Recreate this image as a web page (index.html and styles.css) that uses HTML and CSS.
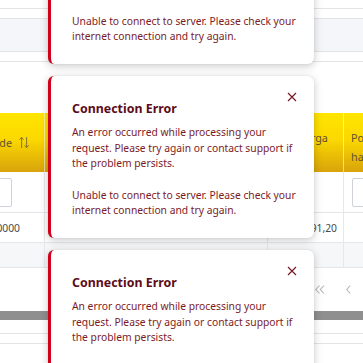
FILE: index.html
```html
<!DOCTYPE html>
<html>
<head>
<meta charset="utf-8">
<link rel="stylesheet" href="styles.css">
</head>
<body>
<div class="page">
  <div class="band b1"></div>
  <div class="band b2"></div>
  <div class="band b3"></div>
  <div class="band b4"></div>
  <div class="spacer"></div>
  <div class="grid thead">
    <div class="th th-sort"><span>de</span>
      <svg class="sort" width="10" height="13" viewBox="0 0 10 13"><path d="M2.6 12V1.5M0.6 3.7L2.6 1.3l2 2.4M7.6 1v10.5M5.6 9.3L7.6 11.7l2-2.4" fill="none" stroke="#8a7628" stroke-width="1"/></svg>
    </div>
    <div class="th"></div>
    <div class="th th-top">Carga</div>
    <div class="th th-top th-last">Porcentagem<br>habilitada</div>
  </div>
  <div class="grid trow inputs">
    <div class="td td-in-left"><div class="box"></div></div>
    <div class="td"></div>
    <div class="td"></div>
    <div class="td td-in-right"><div class="box wide"></div></div>
  </div>
  <div class="grid trow data">
    <div class="td num-left">10000</div>
    <div class="td"></div>
    <div class="td num">91,20</div>
    <div class="td"></div>
  </div>
  <div class="grid trow alt">
    <div class="td"></div>
    <div class="td"></div>
    <div class="td"></div>
    <div class="td"></div>
  </div>
  <div class="pager">
    <svg width="10" height="9" viewBox="0 0 10 9"><path d="M4.5 0.5L0.8 4.5l3.7 4M9 0.5L5.3 4.5l3.7 4" fill="none" stroke="#b5b5b5" stroke-width="1.1"/></svg>
    <svg width="5" height="9" viewBox="0 0 5 9"><path d="M4.3 0.5L0.8 4.5l3.5 4" fill="none" stroke="#b5b5b5" stroke-width="1.1"/></svg>
  </div>
  <div class="scrollbar"></div>
  <div class="band b5"></div>
  <div class="band b6"></div>
</div>

<div class="toasts">
  <div class="toast">
    <button class="close" aria-label="Close"><svg width="10" height="10" viewBox="0 0 10 10"><path d="M1 1l8 8M9 1l-8 8" stroke="#7a1a26" stroke-width="1.2"/></svg></button>
    <div class="title">Connection Error</div>
    <p class="msg">An error occurred while processing your request. Please try again or contact support if the problem persists.</p>
    <p class="msg">Unable to connect to server. Please check your internet connection and try again.</p>
  </div>
  <div class="toast">
    <button class="close" aria-label="Close"><svg width="10" height="10" viewBox="0 0 10 10"><path d="M1 1l8 8M9 1l-8 8" stroke="#7a1a26" stroke-width="1.2"/></svg></button>
    <div class="title">Connection Error</div>
    <p class="msg">An error occurred while processing your request. Please try again or contact support if the problem persists.</p>
    <p class="msg">Unable to connect to server. Please check your internet connection and try again.</p>
  </div>
  <div class="toast">
    <button class="close" aria-label="Close"><svg width="10" height="10" viewBox="0 0 10 10"><path d="M1 1l8 8M9 1l-8 8" stroke="#7a1a26" stroke-width="1.2"/></svg></button>
    <div class="title">Connection Error</div>
    <p class="msg">An error occurred while processing your request. Please try again or contact support if the problem persists.</p>
    <p class="msg">Unable to connect to server. Please check your internet connection and try again.</p>
  </div>
</div>
</body>
</html>
```

FILE: styles.css
```css
html, body {
  margin: 0;
  padding: 0;
  width: 363px;
  height: 363px;
  overflow: hidden;
  background: #ffffff;
  font-family: "Noto Sans", "Open Sans", sans-serif;
}

.page {
  position: relative;
  width: 363px;
  color: #555;
  font-size: 10.3px;
}

.band {
  border-bottom: 1px solid #e2e4e8;
}
.b1 { height: 8px; }
.b2 { height: 9px; }
.b3 { height: 32px; background: #f5f6f9; }
.b4 { height: 9px; }
.spacer { height: 51px; }

.grid {
  display: grid;
  grid-template-columns: 45px 223px 76px 100px;
  width: 444px;
}

.thead {
  height: 59px;
  background: linear-gradient(180deg, #ffe500 0%, #fbd800 45%, #d8a30c 100%);
}
.th {
  border-right: 1px solid rgba(255, 255, 255, 0.55);
  overflow: hidden;
  color: #5f5332;
  font-size: 10.8px;
  line-height: 19px;
  white-space: nowrap;
}
.th-sort {
  display: flex;
  align-items: center;
  justify-content: flex-end;
  gap: 7px;
  padding-right: 15px;
}
.th-sort span { flex: none; }
.sort { flex: none; }
.th-top {
  padding: 15px 0 0 30px;
}
.th-last {
  padding-left: 7px;
  border-right: none;
}

.trow {
  border-bottom: 1px solid #e4e6ea;
}
.td {
  border-right: 1px solid #e6e8ec;
  overflow: hidden;
  white-space: nowrap;
  display: flex;
  align-items: center;
  color: #4a4a4a;
  font-size: 10.3px;
}
.inputs { height: 40px; }
.data { height: 29px; }
.alt { height: 24px; background: #f6f7f9; }

.td-in-left { justify-content: flex-end; padding-right: 32px; }
.td-in-right { padding-left: 8px; }
.box {
  flex: none;
  width: 40px;
  height: 27px;
  border: 1px solid #cfd2d8;
  border-radius: 2px;
  background: #fff;
}

.num-left { justify-content: flex-end; padding-right: 24px; }
.num { justify-content: flex-end; padding-right: 6px; }

.pager {
  height: 43px;
  display: flex;
  align-items: center;
  gap: 21px;
  padding-left: 315px;
}

.scrollbar {
  height: 9px;
  background: #8f8f8f;
}
.b5 { height: 13px; }
.b6 { height: 9px; }

/* toasts overlay */
.toasts {
  position: absolute;
  left: 48px;
  top: -98px;
  width: 266px;
  display: flex;
  flex-direction: column;
  gap: 12px;
}
.toast {
  position: relative;
  box-sizing: border-box;
  background: #fff;
  border-left: 3px solid #d0021b;
  border-radius: 6px;
  box-shadow: 0 2px 8px rgba(0, 0, 0, 0.22), 0 0 1px rgba(0, 0, 0, 0.15);
  padding: 23px 16px 19px 21px;
}
.close {
  position: absolute;
  top: 15px;
  right: 16px;
  width: 12px;
  height: 12px;
  padding: 1px;
  border: none;
  background: none;
  display: flex;
  align-items: center;
  justify-content: center;
}
.title {
  font-size: 12.4px;
  font-weight: 700;
  line-height: 20px;
  color: #5c0c17;
  margin-bottom: 6px;
}
.msg {
  margin: 0;
  font-size: 10.3px;
  line-height: 15.6px;
  color: #7b1b27;
}
.msg + .msg { margin-top: 16px; }
```
